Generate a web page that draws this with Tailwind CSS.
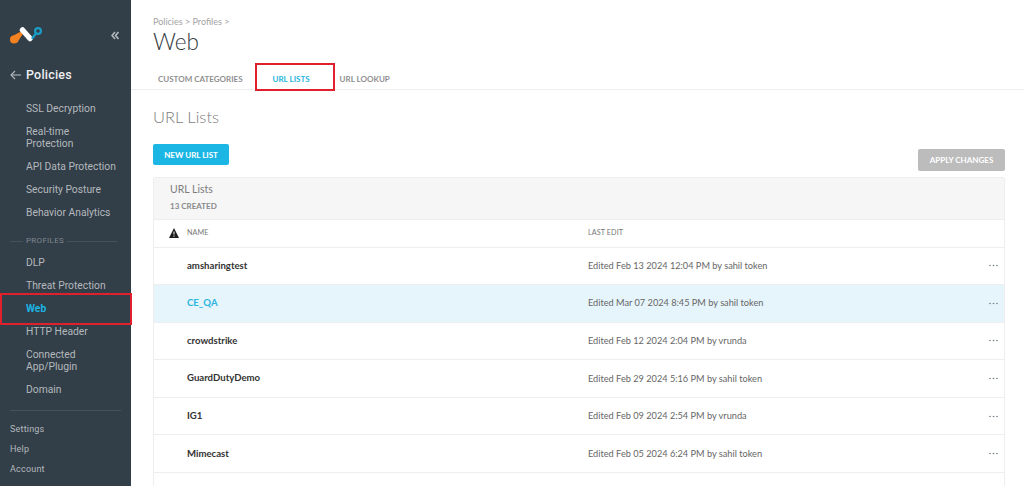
<!DOCTYPE html>
<html lang="en">
<head>
  <meta charset="UTF-8" />
  <title>Web - URL Lists</title>
  <script src="https://cdn.jsdelivr.net/npm/@tailwindcss/browser@4"></script>
</head>
<body class="h-[486px] overflow-hidden bg-white flex font-['Lato','Liberation_Sans',sans-serif]">
  <!-- sidebar -->
  <aside class="w-[131px] h-[486px] shrink-0 bg-[#323e48] flex flex-col relative overflow-hidden font-['Roboto','Liberation_Sans',sans-serif] text-[#b4b9bd]">
    <div class="h-[62px] pt-[25px] pl-[9px] pr-[12px] flex items-start justify-between">
      <svg width="34" height="20" viewBox="0 0 34 20">
        <circle cx="5" cy="14.5" r="4" fill="#f58220"/>
        <path d="M2.5 11.5 L12 6.5 L13.5 9.5 L8 18 Z" fill="#f58220"/>
        <path d="M13.5 5 L21 13.5" stroke="#ffffff" stroke-width="5.5" stroke-linecap="round" fill="none"/>
        <path d="M23.5 13 L27 8.5" stroke="#1a9cc4" stroke-width="2.4" stroke-linecap="round" fill="none"/>
        <circle cx="29" cy="6" r="2.9" fill="none" stroke="#1a9cc4" stroke-width="2.2"/>
      </svg>
      <svg class="mt-[6px]" width="8" height="9" viewBox="0 0 8 9" fill="none" stroke="#b4b9bd" stroke-width="1.6">
        <path d="M4 1 L1 4.5 L4 8"/><path d="M7.5 1 L4.5 4.5 L7.5 8"/>
      </svg>
    </div>
    <div class="h-[26px] pl-[10px] flex items-center gap-[5px]">
      <svg width="11" height="10" viewBox="0 0 11 10" fill="none" stroke="#b4b9bd" stroke-width="1.1">
        <path d="M5 1 L1 5 L5 9"/><path d="M1 5 H11"/>
      </svg>
      <span class="text-[12.5px] font-medium text-[#eef0f1] tracking-[0.2px]">Policies</span>
    </div>
    <nav class="pl-[26px] pr-2 text-[10.3px] leading-[12px] flex flex-col">
      <a class="mt-[10px] py-[5px]">SSL Decryption</a>
      <a class="mt-[1px] py-[5px]">Real-time<br>Protection</a>
      <a class="mt-[1px] py-[5px]">API Data Protection</a>
      <a class="mt-[1px] py-[5px]">Security Posture</a>
      <a class="mt-[1px] py-[5px]">Behavior Analytics</a>
    </nav>
    <div class="mt-[12px] pl-[10px] pr-[14px] flex items-center gap-[3px] text-[8px] leading-[10px] tracking-[0.3px] text-[#7f888f]">
      <span class="w-[13px] h-px bg-[#46525b]"></span>
      <span>PROFILES</span>
      <span class="flex-1 h-px bg-[#46525b]"></span>
    </div>
    <nav class="pl-[26px] pr-2 text-[10.3px] leading-[12px] flex flex-col">
      <a class="mt-[6px] py-[5px]">DLP</a>
      <a class="mt-[1px] py-[5px]">Threat Protection</a>
      <a class="mt-[1px] py-[5px] font-bold text-[#1bb5e3]">Web</a>
      <a class="mt-[1px] py-[5px]">HTTP Header</a>
      <a class="mt-[1px] py-[5px]">Connected<br>App/Plugin</a>
      <a class="mt-[1px] py-[5px]">Domain</a>
    </nav>
    <div class="absolute left-0 right-0 bottom-0 h-[76px] bg-[#323e48] px-[10px] text-[9px] leading-[11px] tracking-[0.2px]">
      <div class="h-px bg-[#46525b] mb-[13px]"></div>
      <div class="mb-[9px]">Settings</div>
      <div class="mb-[9px]">Help</div>
      <div>Account</div>
    </div>
  </aside>
  <div class="absolute left-0 top-[293px] w-[132px] h-[32px] border-[2px] border-[#e0202c]"></div>

  <!-- main -->
  <main class="flex-1 min-w-0">
    <div class="pl-[22px] pt-[16px] text-[9px] leading-[11px] text-[#a3a3a3]">Policies &gt; Profiles &gt;</div>
    <h1 class="pl-[22px] mt-[1px] text-[22.5px] leading-[28px] font-light text-[#333a40]">Web</h1>
    <div class="h-[34px] border-b border-[#eeeeee] pl-[27px] pt-[13px] flex text-[8px] font-bold leading-[20px] text-[#8f8f8f]">
      <span>CUSTOM CATEGORIES</span>
      <span class="ml-[30px] text-[#2ab4e0] relative">URL LISTS
        <span class="absolute left-[-18px] top-[-6px] w-[80px] h-[28px] border-[2px] border-[#e0202c]"></span>
      </span>
      <span class="ml-[30px]">URL LOOKUP</span>
    </div>
    <h2 class="pl-[22px] mt-[15px] text-[16.5px] leading-[24px] font-light text-[#7d7d7d]">URL Lists</h2>
    <div class="mt-[15px] pl-[22px] pr-[19px] flex items-start justify-between">
      <button class="w-[76px] h-[21px] bg-[#1bb6e4] rounded-[2px] text-white text-[8px] font-bold">NEW URL LIST</button>
      <button class="mt-[5px] w-[87px] h-[22px] bg-[#bcbcbc] rounded-[2px] text-white text-[8px] font-bold">APPLY CHANGES</button>
    </div>
    <section class="ml-[22px] mr-[19px] mt-[6px] border border-[#eeeeee] rounded-t-[2px]">
      <div class="h-[42px] bg-[#f6f6f6] border-b border-[#eeeeee] pl-[16px] pt-[4px]">
        <div class="text-[10.5px] leading-[14px] text-[#7d7d7d]">URL Lists</div>
        <div class="mt-[5px] text-[8px] leading-[10px] font-bold text-[#8a8a8a]">13 CREATED</div>
      </div>
      <div class="h-[27.5px] border-b border-[#eeeeee] flex items-center text-[7.2px] text-[#777777] tracking-[0.1px]">
        <div class="w-[33px] pl-[15px]">
          <svg width="10" height="10" viewBox="0 0 10 10"><path d="M5 0 L10 10 H0 Z" fill="#1d1d1d"/><path d="M5 3.5 V6.5" stroke="#fff" stroke-width="1"/><path d="M5 7.5 V8.7" stroke="#fff" stroke-width="1"/></svg>
        </div>
        <div class="w-[401px]">NAME</div>
        <div>LAST EDIT</div>
      </div>
      <div class="h-[37.6px] border-b border-[#eeeeee] flex items-center text-[9.2px]">
        <div class="w-[401px] ml-[33px] text-[9.6px] font-bold text-[#333333]">amsharingtest</div>
        <div class="flex-1 text-[#666666]">Edited Feb 13 2024 12:04 PM by sahil token</div>
        <svg class="mr-[6px]" width="9" height="3" viewBox="0 0 9 3" fill="#6f7a85"><circle cx="1" cy="1.5" r="0.8"/><circle cx="4.5" cy="1.5" r="0.8"/><circle cx="8" cy="1.5" r="0.8"/></svg>
      </div>
      <div class="h-[37.6px] border-b border-[#eeeeee] bg-[#e6f5fb] flex items-center text-[9.2px]">
        <div class="w-[401px] ml-[33px] text-[9.6px] font-bold text-[#2ab4e0]">CE_QA</div>
        <div class="flex-1 text-[#666666]">Edited Mar 07 2024 8:45 PM by sahil token</div>
        <svg class="mr-[6px]" width="9" height="3" viewBox="0 0 9 3" fill="#6f7a85"><circle cx="1" cy="1.5" r="0.8"/><circle cx="4.5" cy="1.5" r="0.8"/><circle cx="8" cy="1.5" r="0.8"/></svg>
      </div>
      <div class="h-[37.6px] border-b border-[#eeeeee] flex items-center text-[9.2px]">
        <div class="w-[401px] ml-[33px] text-[9.6px] font-bold text-[#333333]">crowdstrike</div>
        <div class="flex-1 text-[#666666]">Edited Feb 12 2024 2:04 PM by vrunda</div>
        <svg class="mr-[6px]" width="9" height="3" viewBox="0 0 9 3" fill="#6f7a85"><circle cx="1" cy="1.5" r="0.8"/><circle cx="4.5" cy="1.5" r="0.8"/><circle cx="8" cy="1.5" r="0.8"/></svg>
      </div>
      <div class="h-[37.6px] border-b border-[#eeeeee] flex items-center text-[9.2px]">
        <div class="w-[401px] ml-[33px] text-[9.6px] font-bold text-[#333333]">GuardDutyDemo</div>
        <div class="flex-1 text-[#666666]">Edited Feb 29 2024 5:16 PM by sahil token</div>
        <svg class="mr-[6px]" width="9" height="3" viewBox="0 0 9 3" fill="#6f7a85"><circle cx="1" cy="1.5" r="0.8"/><circle cx="4.5" cy="1.5" r="0.8"/><circle cx="8" cy="1.5" r="0.8"/></svg>
      </div>
      <div class="h-[37.6px] border-b border-[#eeeeee] flex items-center text-[9.2px]">
        <div class="w-[401px] ml-[33px] text-[9.6px] font-bold text-[#333333]">IG1</div>
        <div class="flex-1 text-[#666666]">Edited Feb 09 2024 2:54 PM by vrunda</div>
        <svg class="mr-[6px]" width="9" height="3" viewBox="0 0 9 3" fill="#6f7a85"><circle cx="1" cy="1.5" r="0.8"/><circle cx="4.5" cy="1.5" r="0.8"/><circle cx="8" cy="1.5" r="0.8"/></svg>
      </div>
      <div class="h-[37.6px] border-b border-[#eeeeee] flex items-center text-[9.2px]">
        <div class="w-[401px] ml-[33px] text-[9.6px] font-bold text-[#333333]">Mimecast</div>
        <div class="flex-1 text-[#666666]">Edited Feb 05 2024 6:24 PM by sahil token</div>
        <svg class="mr-[6px]" width="9" height="3" viewBox="0 0 9 3" fill="#6f7a85"><circle cx="1" cy="1.5" r="0.8"/><circle cx="4.5" cy="1.5" r="0.8"/><circle cx="8" cy="1.5" r="0.8"/></svg>
      </div>
      <div class="h-[30px]"></div>
    </section>
  </main>
</body>
</html>
